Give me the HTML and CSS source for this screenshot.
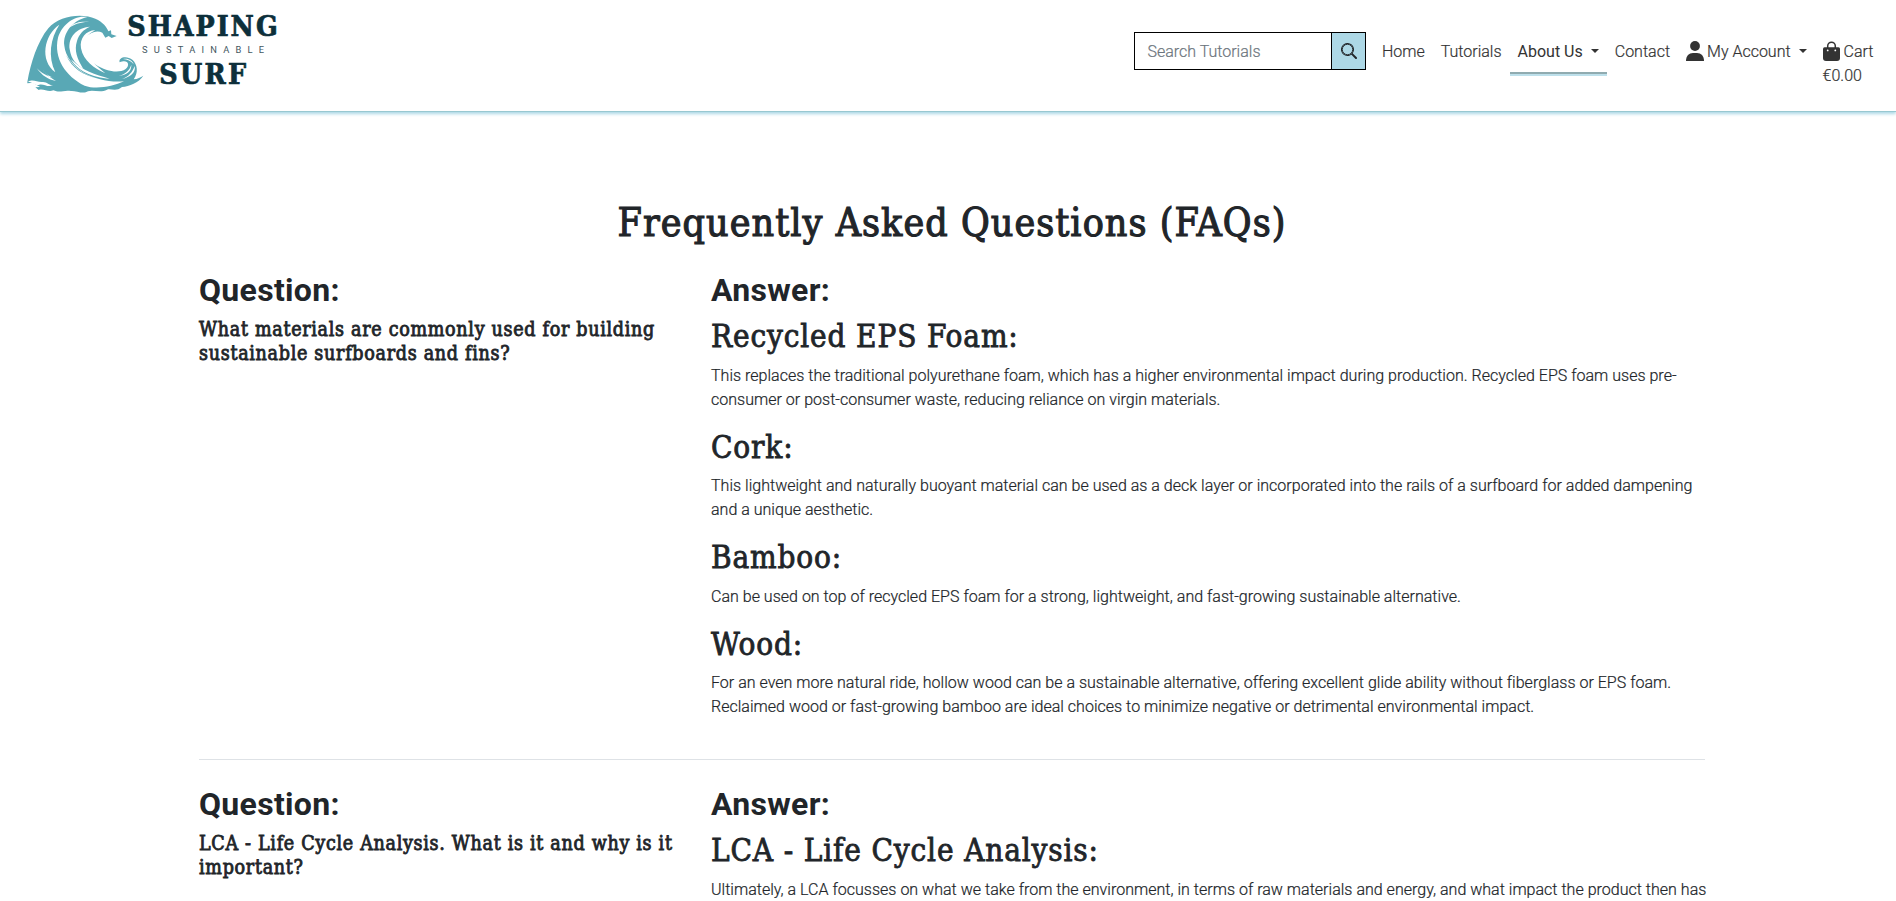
FILE: index.html
```
<!DOCTYPE html>
<html lang="en">
<head>
<meta charset="utf-8">
<title>FAQs - Shaping Sustainable Surf</title>
<link rel="stylesheet" href="styles.css">
</head>
<body>
<header class="site-header">
  <a class="brand">
    <svg class="logo" viewBox="0 0 900 330" aria-label="Shaping Sustainable Surf">
      <path class="wave" d="M82 246C92 190 112 125 145 85C178 45 248 39 286 56C309 66 321 82 325 94L333 91L334 103L350 108L335 114L326 108L316 113L307 98C288 88 262 101 251 121C238 148 260 177 287 194C318 213 355 222 377 207C392 194 383 176 359 187C354 172 380 165 398 180C412 193 416 218 401 238C414 237 421 232 430 227C416 248 388 259 366 261C349 276 333 265 321 269C302 279 278 268 264 274C250 284 225 271 213 273C190 269 182 280 160 271C144 278 130 264 116 270L106 262L120 261L99 248L82 250Z"/>
      <g class="foam">
        <path d="M178 74C132 105 118 181 166 217C143 169 151 116 178 74Z"/>
        <path d="M262 51C220 44 185 77 174 113C160 174 197 229 254 257C287 269 338 260 372 244C330 248 287 238 251 218C220 198 196 169 193 137C188 99 218 61 262 51Z"/>
        <path d="M270 80C229 84 204 111 209 148C214 181 231 195 250 207C231 175 222 151 231 123C237 102 251 88 270 80Z"/>
        <path d="M286 91C258 91 238 115 243 145C250 182 282 205 316 220C290 196 263 177 256 149C249 121 263 101 286 91Z"/>
        <path d="M213 178C230 211 277 234 329 236C284 224 249 213 213 178Z"/>
        <path d="M110 204C126 227 145 239 168 243C144 228 132 217 125 203C132 218 146 230 165 234C139 229 123 218 110 204Z"/>
        <path d="M84 245C101 236 111 248 129 246C142 246 148 257 159 256C143 263 130 250 118 254C106 258 99 246 84 245Z"/>
        <path d="M404 198C408 218 391 231 366 237C387 229 397 217 404 198Z"/>
        <path d="M394 194C395 214 380 225 356 228C378 221 388 212 394 194Z"/>
        <path d="M369 177C384 173 398 182 401 193C393 182 382 178 369 177Z"/>
        <path d="M209 82C226 64 249 64 268 66C244 65 226 72 209 82Z"/>
      </g>
      <path class="streak" d="M198 165C216 206 252 226 290 235C250 223 223 205 198 165ZM234 125C224 155 247 187 283 213C250 188 230 158 234 125Z"/>
      <g class="logo-name">
        <text x="382" y="107" textLength="451" lengthAdjust="spacing">SHAPING</text>
        <text x="478" y="251" textLength="260" lengthAdjust="spacing">SURF</text>
      </g>
      <text class="logo-tag" x="426" y="158" textLength="366" lengthAdjust="spacing">SUSTAINABLE</text>
    </svg>
  </a>
  <nav class="nav">
    <form class="search">
      <input class="search-input" type="text" placeholder="Search Tutorials">
      <button class="search-button" type="button" aria-label="Search">
        <svg width="16" height="16" viewBox="0 0 16 16" fill="currentColor"><path d="M11.742 10.344a6.5 6.5 0 1 0-1.397 1.398h-.001q.044.06.098.115l3.85 3.85a1 1 0 0 0 1.415-1.414l-3.85-3.85a1 1 0 0 0-.115-.1zM12 6.5a5.5 5.5 0 1 1-11 0 5.5 5.5 0 0 1 11 0"/><circle cx="6.5" cy="6.5" r="5.2" fill="none" stroke="currentColor" stroke-width=".9"/></svg>
      </button>
    </form>
    <a class="nav-link">Home</a>
    <a class="nav-link">Tutorials</a>
    <a class="nav-link active">About Us<span class="caret"></span></a>
    <a class="nav-link">Contact</a>
    <a class="nav-link account"><svg class="user-icon" viewBox="0 0 18 20"><circle cx="9" cy="5" r="4.9"/><path d="M0 20C0 14.700 3 12 7 12H11C15 12 18 14.700 18 20Z"/></svg>My Account<span class="caret"></span></a>
    <a class="nav-link cart">
      <svg class="bag-icon" viewBox="0 0 17 20"><path class="handle" d="M4.700 10V5a3.800 3.800 0 0 1 7.600 0V10"/><path d="M0 7.800Q0 6.300 1.500 6.300H15.500Q17 6.300 17 7.800V17Q17 20 14 20H3Q0 20 0 17Z"/><circle class="eyelet" cx="4.700" cy="9.400" r=".9"/><circle class="eyelet" cx="12.300" cy="9.400" r=".9"/></svg>Cart<br>€0.00</a>
  </nav>
</header>
<main class="faq">
  <h1 class="title">Frequently Asked Questions (FAQs)</h1>
  <section class="row">
    <div class="question">
      <h2 class="label">Question:</h2>
      <h5 class="asked">What materials are commonly used for building<br>sustainable surfboards and fins?</h5>
    </div>
    <div class="answer">
      <h2 class="label">Answer:</h2>
      <h3 class="topic">Recycled EPS Foam:</h3>
      <p class="text">This replaces the traditional polyurethane foam, which has a higher environmental impact during production. Recycled EPS foam uses pre-<br>consumer or post-consumer waste, reducing reliance on virgin materials.</p>
      <h3 class="topic">Cork:</h3>
      <p class="text">This lightweight and naturally buoyant material can be used as a deck layer or incorporated into the rails of a surfboard for added dampening<br>and a unique aesthetic.</p>
      <h3 class="topic">Bamboo:</h3>
      <p class="text">Can be used on top of recycled EPS foam for a strong, lightweight, and fast-growing sustainable alternative.</p>
      <h3 class="topic">Wood:</h3>
      <p class="text">For an even more natural ride, hollow wood can be a sustainable alternative, offering excellent glide ability without fiberglass or EPS foam.<br>Reclaimed wood or fast-growing bamboo are ideal choices to minimize negative or detrimental environmental impact.</p>
    </div>
  </section>
  <section class="row">
    <div class="question">
      <h2 class="label">Question:</h2>
      <h5 class="asked">LCA - Life Cycle Analysis. What is it and why is it<br>important?</h5>
    </div>
    <div class="answer">
      <h2 class="label">Answer:</h2>
      <h3 class="topic">LCA - Life Cycle Analysis:</h3>
      <p class="text">Ultimately, a LCA focusses on what we take from the environment, in terms of raw materials and energy, and what impact the product then has</p>
    </div>
  </section>
</main>
</body>
</html>
```
FILE: styles.css
```
* { box-sizing: border-box; }

body {
  margin: 0;
  height: 901px;
  overflow: hidden;
  background: #fff;
  color: #212529;
  font: 300 16px/24px Roboto, sans-serif;
}

h1, h2, h3, h5, p { margin: 0; }

.site-header {
  display: flex;
  justify-content: space-between;
  align-items: flex-start;
  height: 112px;
  padding-right: 14.5px;
  border-bottom: 1px solid #98c8d1;
  box-shadow: 0 2px 3px #add8e6;
}

.brand { display: block; }
.logo { display: block; width: 300px; height: 110px; }
.wave { fill: #59a8b5; }
.foam { fill: #fff; }
.streak { fill: #59a8b5; }
.logo-name {
  fill: #0d2f3b;
  stroke: #0d2f3b;
  stroke-width: 2px;
  font: bold 85px "DejaVu Serif Condensed", "DejaVu Serif", serif;
}
.logo-tag { fill: #44585f; font: 400 28px Roboto, sans-serif; }

.nav {
  display: flex;
  padding-top: 32px;
  color: #333;
  -webkit-text-stroke: .2px;
}
.search { display: flex; width: 232px; height: 38px; margin-right: 7.5px; }
.search-input {
  width: 197px;
  padding: 0 12px;
  border: 1px solid #000;
  border-right: 0;
  background: #fff;
  font: 300 16px Roboto, sans-serif;
  -webkit-text-stroke: .2px;
}
.search-input::placeholder { color: #6c757d; opacity: 1; }
.search-button {
  display: flex;
  align-items: center;
  justify-content: center;
  width: 35px;
  padding: 0;
  border: 1px solid #000;
  background: #add8e6;
  color: #212529;
}
.nav-link { height: 40px; padding: 8px 8px 0; white-space: nowrap; }
.active {
  height: 42px;
  border-bottom: 2px solid #90abb0;
  box-shadow: 0 2px 0 #bde0eb;
  font-weight: 400;
  -webkit-text-stroke: 0;
}
.caret {
  display: inline-block;
  margin-left: 8px;
  vertical-align: 4px;
  border-top: 4px solid #333;
  border-left: 4px solid transparent;
  border-right: 4px solid transparent;
}
.user-icon, .bag-icon { display: inline-block; fill: #333; vertical-align: -4px; }
.user-icon { width: 18px; height: 20px; margin-right: 3px; }
.bag-icon { width: 17px; height: 20px; margin-right: 4px; }
.handle { fill: none; stroke: #333; stroke-width: 1.5; }
.eyelet { fill: #fff; }

.faq { width: 1506px; margin: 87px 0 0 199px; }
.title, .topic, .asked {
  font-family: "DejaVu Serif Condensed", "DejaVu Serif", serif;
  font-weight: 400;
}
.title {
  margin-bottom: 24px;
  font-size: 39px;
  line-height: 48px;
  letter-spacing: 1.05px;
  text-align: center;
  -webkit-text-stroke: 1.1px #212529;
}
.row { display: grid; grid-template-columns: 488px 994px; column-gap: 24px; }
.row + .row { padding-top: 25px; margin-top: 24px; border-top: 1px solid #dee2e6; }
.label {
  margin-bottom: 8px;
  font-size: 32px;
  line-height: 38.4px;
  font-weight: 700;
  letter-spacing: .3px;
}
.asked {
  padding-top: 1px;
  font-size: 19.5px;
  line-height: 24px;
  letter-spacing: .7px;
  -webkit-text-stroke: .8px #212529;
}
.topic {
  margin-bottom: 8px;
  font-size: 31.2px;
  line-height: 38.4px;
  letter-spacing: .85px;
  -webkit-text-stroke: .8px #212529;
}
.text {
  margin-bottom: 16px;
  white-space: nowrap;
  letter-spacing: .018px;
  -webkit-text-stroke: .2px;
}
```
